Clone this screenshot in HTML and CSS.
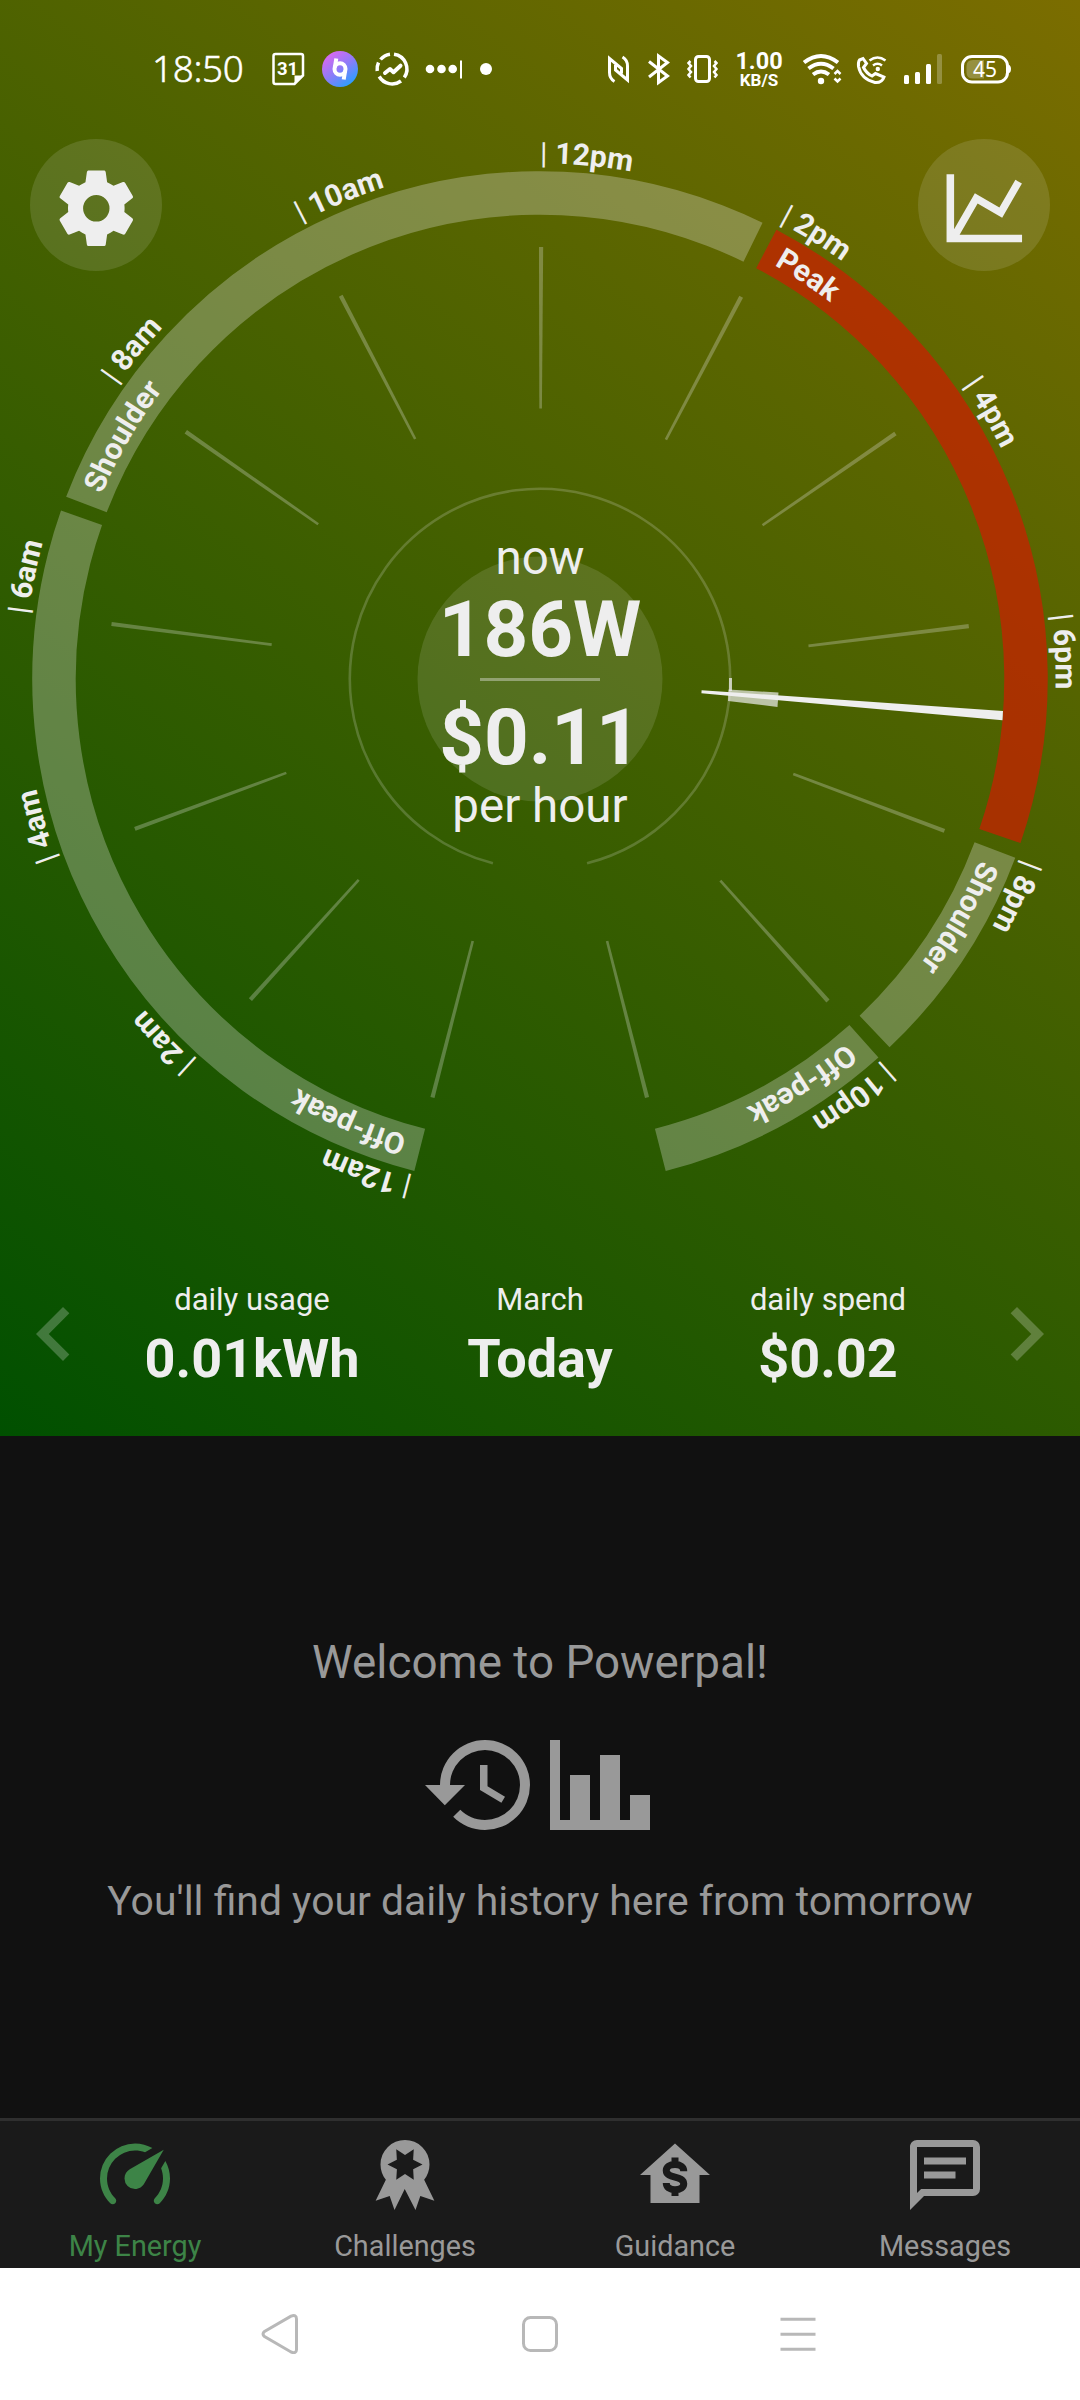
FILE: index.html
```html
<!DOCTYPE html>
<html lang="en">
<head>
<meta charset="utf-8">
<title>Powerpal</title>
<link rel="stylesheet" href="styles.css">
</head>
<body>
<main class="app">
  <section class="hero">
    <header class="status">
      <span class="clock">18:50</span>
      <svg width="32" height="40" viewBox="272 49 32 40"><path d="M275.500 54h25.500q2 0 2 2v19.500l-8.500 8.500H275.500q-2 0-2-2V56q0-2 2-2z" class="line w25"/><path d="M302.500 75.500h-8v8z" class="solid"/><text x="287.500" y="75" class="cal">31</text></svg>
      <svg width="36" height="40" viewBox="322 49 36 40"><defs><linearGradient id="orb" x1=".2" y1=".1" x2=".8" y2=".9"><stop offset="0" stop-color="#d56af0"/><stop offset=".5" stop-color="#8d7cf8"/><stop offset="1" stop-color="#2f9dff"/></linearGradient></defs><circle cx="340" cy="69" r="18" fill="url(#orb)"/><ellipse cx="340" cy="69" rx="5.500" ry="5.800" class="line w4"/><path d="M336.300 58.500l-1.500 9M343.700 79.500l1.500-9" class="line w4"/></svg>
      <svg width="32" height="40" viewBox="376 49 32 40"><path d="M394 54.200A15 15 0 0 1 404.300 77.500M401 81A15 15 0 0 1 379.200 76.500M377.200 71A15 15 0 0 1 378.500 62.500M380.500 59.500A15 15 0 0 1 390 54.200" class="line w35"/><path d="M385 73l5-4 3.500 3.200 7-6.500" class="line w4 round"/></svg>
      <svg width="36" height="40" viewBox="426 49 36 40"><g class="solid"><circle cx="430" cy="69" r="4.300"/><circle cx="441.500" cy="69" r="4.300"/><circle cx="452.700" cy="69" r="4.300"/><path d="M460 60.500h2v18h-2z"/></g></svg>
      <svg width="12" height="40" viewBox="480 49 12 40"><circle cx="486" cy="69" r="6" class="solid"/></svg>
      <div class="system">
        <svg width="22" height="40" viewBox="608 49 22 40"><path d="M614.500 81.500q-5-3-5-9V58.500L621.500 68.500v5M622.500 57q5 3 5 9V80L615.500 70v-5" class="line w3"/></svg>
        <svg width="21" height="40" viewBox="648 49 21 40"><path d="M649 61.500l18.500 14.500-9 6.500V56l9 6.500L649 77" class="line w3"/></svg>
        <svg width="31" height="40" viewBox="687 49 31 40"><rect x="695.500" y="56.500" width="14" height="25" rx="3" class="line w3"/><path d="M690.500 61l-2 2 2.500 3-2.500 3 2.500 3-2.500 3 2 2.500M714.500 61l2 2-2.500 3 2.500 3-2.500 3 2.500 3-2 2.500" class="line w25"/></svg>
        <div class="speed"><span class="rate">1.00</span><span class="unit">KB/S</span></div>
        <svg width="41" height="40" viewBox="800 49 41 40"><path d="M804 62.500Q821 49.500 838 62.500M808.500 68.500Q821 59 833.500 68.500M813 74.500Q821 68.500 829 74.500" class="line w4"/><circle cx="821" cy="81" r="3.200" class="solid"/><path d="M834.500 74l3-3 3 3M834.500 78.500l3 3 3-3" class="line w25"/></svg>
        <svg width="28" height="40" viewBox="859 49 28 40"><path d="M859.500 60l3.500-1.500 3.500 5-3 4q3 6 8.500 8.500l3.500-2.500 8.500 3.500q-2 6-9 5.500-14-3.500-16.500-16-.5-4.500 1-6.500z" class="line w3"/><path d="M869.500 60.500q8-6 16 0M873 65.500q4.500-3.500 9 0" class="line w25"/><circle cx="877.800" cy="69" r="2.200" class="solid"/></svg>
        <svg width="38" height="40" viewBox="905 49 38 40"><g class="solid"><rect x="904" y="75" width="5" height="9" rx="1.500"/><rect x="915" y="72" width="5" height="12" rx="1.500"/><rect x="926" y="64" width="5" height="20" rx="1.500"/><rect x="937" y="54" width="5" height="30" rx="1.500" opacity=".25"/></g></svg>
        <svg width="50" height="40" viewBox="961 49 50 40"><rect x="962.500" y="56.500" width="45" height="25.500" rx="9.500" class="line w3"/><path d="M1008.500 64.500q2.500 1 2.500 4.500t-2.500 4.500z" class="solid"/><path d="M973 60h11v18.500h-11q-6.500 0-6.500-6v-6.500q0-6 6.500-6z" class="solid" opacity=".25"/><text x="985" y="76.700" class="batt">45</text></svg>
      </div>
    </header>

    <div class="stage">
      <svg class="dial" width="1080" height="1120" viewBox="0 110 1080 1120">
        <defs>
          <path id="hours" d="M540 163.500A515.500 515.500 0 0 1 540 1194.500A515.500 515.500 0 0 1 540 163.500"/>
          <path id="tariffs" d="M540 203.500A475.500 475.500 0 0 1 540 1154.500A475.500 475.500 0 0 1 540 203.500"/>
          <path id="tick" d="M538 247h4.200L541.300 408.500h-2.600z"/>
        </defs>
        <g class="band">
          <circle cx="540" cy="679" r="486" pathLength="360" stroke-dasharray="95.050 400" transform="rotate(104.330 540 679)"/>
          <circle cx="540" cy="679" r="486" pathLength="360" stroke-dasharray="94.950 400" transform="rotate(201.050 540 679)"/>
          <circle class="peak" cx="540" cy="679" r="486" pathLength="360" stroke-dasharray="81.100 400" transform="rotate(-62.250 540 679)"/>
          <circle cx="540" cy="679" r="486" pathLength="360" stroke-dasharray="25.900 400" transform="rotate(20.600 540 679)"/>
          <circle cx="540" cy="679" r="486" pathLength="360" stroke-dasharray="27.470 400" transform="rotate(48.200 540 679)"/>
        </g>
        <circle class="orbit" cx="540" cy="679" r="190.200" pathLength="360" stroke-dasharray="331.340 400" transform="rotate(104.330 540 679)"/>
        <g class="ticks">
          <use href="#tick" transform="rotate(194.400 540 679)"/>
          <use href="#tick" transform="rotate(222.080 540 679)"/>
          <use href="#tick" transform="rotate(249.690 540 679)"/>
          <use href="#tick" transform="rotate(277.300 540 679)"/>
          <use href="#tick" transform="rotate(304.910 540 679)"/>
          <use href="#tick" transform="rotate(332.520 540 679)"/>
          <use href="#tick" transform="rotate(.13 540 679)"/>
          <use href="#tick" transform="rotate(27.740 540 679)"/>
          <use href="#tick" transform="rotate(55.350 540 679)"/>
          <use href="#tick" transform="rotate(82.960 540 679)"/>
          <use href="#tick" transform="rotate(110.570 540 679)"/>
          <use href="#tick" transform="rotate(138.180 540 679)"/>
          <use href="#tick" transform="rotate(165.640 540 679)"/>
        </g>
        <circle class="core" cx="540" cy="679" r="122.500"/>
        <path class="trail" d="M730.500 678v13"/>
        <path class="average" d="M728.500 689.500L778.500 692.500L777.500 707L728 701z"/>
        <path class="needle" d="M701.600 690.200L1003 711L1002.500 720.300L701.400 693.300z"/>
        <g class="hours">
          <text transform="rotate(194.330 540 679)"><textPath href="#hours"><tspan class="bar">| </tspan>12am</textPath></text>
          <text transform="rotate(221.940 540 679)"><textPath href="#hours"><tspan class="bar">| </tspan>2am</textPath></text>
          <text transform="rotate(249.550 540 679)"><textPath href="#hours"><tspan class="bar">| </tspan>4am</textPath></text>
          <text transform="rotate(277.160 540 679)"><textPath href="#hours"><tspan class="bar">| </tspan>6am</textPath></text>
          <text transform="rotate(304.780 540 679)"><textPath href="#hours"><tspan class="bar">| </tspan>8am</textPath></text>
          <text transform="rotate(332.390 540 679)"><textPath href="#hours"><tspan class="bar">| </tspan>10am</textPath></text>
          <text><textPath href="#hours"><tspan class="bar">| </tspan>12pm</textPath></text>
          <text transform="rotate(27.610 540 679)"><textPath href="#hours"><tspan class="bar">| </tspan>2pm</textPath></text>
          <text transform="rotate(55.220 540 679)"><textPath href="#hours"><tspan class="bar">| </tspan>4pm</textPath></text>
          <text transform="rotate(82.840 540 679)"><textPath href="#hours"><tspan class="bar">| </tspan>6pm</textPath></text>
          <text transform="rotate(110.450 540 679)"><textPath href="#hours"><tspan class="bar">| </tspan>8pm</textPath></text>
          <text transform="rotate(138.060 540 679)"><textPath href="#hours"><tspan class="bar">| </tspan>10pm</textPath></text>
        </g>
        <g class="hours">
          <text transform="rotate(196.230 540 679)"><textPath href="#tariffs">Off-peak</textPath></text>
          <text transform="rotate(292.870 540 679)"><textPath href="#tariffs">Shoulder</textPath></text>
          <text transform="rotate(29.510 540 679)"><textPath href="#tariffs">Peak</textPath></text>
          <text transform="rotate(112.350 540 679)"><textPath href="#tariffs">Shoulder</textPath></text>
          <text transform="rotate(139.960 540 679)"><textPath href="#tariffs">Off-peak</textPath></text>
        </g>
      </svg>
      <div class="readout">
        <span class="caption">now</span>
        <strong class="figure">186W</strong>
        <span class="rule"></span>
        <strong class="figure">$0.11</strong>
        <span class="caption">per hour</span>
      </div>
      <div class="actions">
        <div class="round-btn"><svg width="90.600" height="90.600" viewBox="0 0 24 24"><path d="M12,15.500A3.500,3.500 0 0,1 8.500,12A3.500,3.500 0 0,1 12,8.500A3.500,3.500 0 0,1 15.500,12A3.500,3.500 0 0,1 12,15.500M19.430,12.970C19.470,12.650 19.500,12.330 19.500,12C19.500,11.670 19.470,11.340 19.430,11L21.540,9.370C21.730,9.220 21.780,8.950 21.660,8.730L19.660,5.270C19.540,5.050 19.270,4.960 19.050,5.050L16.560,6.050C16.040,5.660 15.500,5.320 14.870,5.070L14.500,2.420C14.460,2.180 14.250,2 14,2H10C9.750,2 9.540,2.180 9.500,2.420L9.130,5.070C8.500,5.320 7.960,5.660 7.440,6.050L4.950,5.050C4.730,4.960 4.460,5.050 4.340,5.270L2.340,8.730C2.210,8.950 2.270,9.220 2.460,9.370L4.570,11C4.530,11.340 4.500,11.670 4.500,12C4.500,12.330 4.530,12.650 4.570,12.970L2.460,14.630C2.270,14.780 2.210,15.050 2.340,15.270L4.340,18.730C4.460,18.950 4.730,19.030 4.950,18.950L7.440,17.940C7.960,18.340 8.500,18.680 9.130,18.930L9.500,21.580C9.540,21.820 9.750,22 10,22H14C14.250,22 14.460,21.820 14.500,21.580L14.870,18.930C15.500,18.670 16.040,18.340 16.560,17.940L19.050,18.950C19.270,19.030 19.540,18.950 19.660,18.730L21.660,15.270C21.780,15.050 21.730,14.780 21.540,14.630L19.430,12.970Z"/></svg></div>
        <div class="round-btn"><svg width="90.600" height="90.600" viewBox="0 0 24 24"><path d="M16,11.780L20.240,4.450L21.970,5.450L16.740,14.500L10.230,10.750L5.460,19H22V21H2V3H4V17.540L9.500,8L16,11.780Z"/></svg></div>
      </div>
    </div>

    <div class="day">
      <svg class="chevron" width="108" height="108" viewBox="0 0 24 24"><path d="M15.410,16.580L10.830,12L15.410,7.410L14,6L8,12L14,18L15.410,16.580Z"/></svg>
      <div class="stat"><span>daily usage</span><strong>0.01kWh</strong></div>
      <div class="stat"><span>March</span><strong>Today</strong></div>
      <div class="stat"><span>daily spend</span><strong>$0.02</strong></div>
      <svg class="chevron" width="108" height="108" viewBox="0 0 24 24"><path d="M8.590,16.580L13.170,12L8.590,7.410L10,6L16,12L10,18L8.590,16.580Z"/></svg>
    </div>
  </section>

  <section class="history">
    <p class="welcome">Welcome to Powerpal!</p>
    <div class="glyphs">
      <svg width="120" height="120" viewBox="0 0 24 24"><path d="M13.500,8H12V13L16.280,15.540L17,14.330L13.500,12.250V8M13,3A9,9 0 0,0 4,12H1L4.960,16.030L9,12H6A7,7 0 0,1 13,5A7,7 0 0,1 20,12A7,7 0 0,1 13,19C11.070,19 9.320,18.210 8.060,16.940L6.640,18.360C8.270,20 10.500,21 13,21A9,9 0 0,0 22,12A9,9 0 0,0 13,3"/></svg>
      <svg width="120" height="120" viewBox="0 0 24 24"><path d="M22,21H2V3H4V19H6V10H10V19H12V6H16V19H18V14H22V21Z"/></svg>
    </div>
    <p class="hint">You'll find your daily history here from tomorrow</p>
  </section>

  <nav class="tabs">
    <div class="tab active"><svg width="84" height="84" viewBox="0 0 24 24"><path d="M12,16A3,3 0 0,1 9,13C9,11.880 9.610,10.900 10.500,10.390L20.210,4.770L14.680,14.350C14.180,15.330 13.170,16 12,16M12,3C13.810,3 15.500,3.500 16.970,4.320L14.870,5.530C14,5.190 13,5 12,5A8,8 0 0,0 4,13C4,15.210 4.890,17.210 6.340,18.650H6.350C6.740,19.040 6.740,19.670 6.350,20.060C5.960,20.450 5.320,20.450 4.930,20.070V20.070C3.120,18.260 2,15.760 2,13A10,10 0 0,1 12,3M22,13C22,15.760 20.880,18.260 19.070,20.070V20.070C18.680,20.450 18.050,20.450 17.660,20.060C17.270,19.670 17.270,19.040 17.660,18.650V18.650C19.110,17.200 20,15.210 20,13C20,12 19.810,11 19.460,10.100L20.670,8C21.500,9.500 22,11.180 22,13Z"/></svg><span>My Energy</span></div>
    <div class="tab"><svg width="84" height="84" viewBox="0 0 24 24"><path d="M20.390,19.370L16.380,18L15,22L11.920,16L9,22L7.620,18L3.610,19.370L6.530,13.370C5.570,12.170 5,10.650 5,9A7,7 0 0,1 12,2A7,7 0 0,1 19,9C19,10.650 18.430,12.170 17.470,13.370L20.390,19.370M7,9L9.690,10.340L9.500,13.340L12,11.680L14.500,13.330L14.330,10.340L17,9L14.320,7.650L14.500,4.670L12,6.310L9.500,4.650L9.670,7.660L7,9Z"/></svg><span>Challenges</span></div>
    <div class="tab"><svg width="84" height="84" viewBox="0 0 24 24"><path d="M12,3L2,12H5V20H19V12H22Z"/><path class="dollar" d="M14.500 10.900C14.500 9.700 13.500 9 12 9S9.500 9.700 9.500 10.700C9.500 13.200 14.500 12 14.500 14.500C14.500 15.500 13.500 16.200 12 16.200S9.500 15.500 9.500 14.300M12 7V9M12 16V18"/></svg><span>Guidance</span></div>
    <div class="tab"><svg width="84" height="84" viewBox="0 0 24 24"><path d="M20,2A2,2 0 0,1 22,4V16A2,2 0 0,1 20,18H6L2,22V4C2,2.890 2.900,2 4,2H20M4,4V17.170L5.170,16H20V4H4M6,7H18V9H6V7M6,11H15V13H6V11Z"/></svg><span>Messages</span></div>
  </nav>

  <footer class="system-nav">
    <svg width="40" height="44" viewBox="260 2312 40 44"><path d="M264.500 2331.500Q261.500 2334 264.500 2336.500L291 2352Q296.500 2354 296.500 2349.500V2319Q296.500 2314 291 2316.200Z"/></svg>
    <svg width="36" height="44" viewBox="522 2312 36 44"><rect x="523.500" y="2317.500" width="33" height="33" rx="7"/></svg>
    <svg width="36" height="44" viewBox="780 2312 36 44"><path d="M780.500 2319.300h35M780.500 2334.300h35M780.500 2349.300h35"/></svg>
  </footer>
</main>
</body>
</html>
```
FILE: styles.css
```css
* { box-sizing: border-box; }

body {
  margin: 0;
  background: #111;
  font-family: Roboto, "Liberation Sans", sans-serif;
  color: #eee;
}

p { margin: 0; }
svg { display: block; flex: none; overflow: visible; }

.app {
  width: 1080px;
  height: 2400px;
  display: flex;
  flex-direction: column;
}

/* Hero */
.hero {
  height: 1436px;
  background: linear-gradient(36.950deg, #005000 0%, #7b6d00 100%);
}

.status {
  height: 110px;
  padding: 49px 69px 0 152px;
  display: flex;
  align-items: flex-start;
  gap: 18px;
  color: #fff;
}
.clock {
  width: 102px;
  font: 300 36.800px/39px "Noto Sans", sans-serif;
  letter-spacing: -.3px;
  -webkit-text-stroke: .5px #fff;
}
.system {
  margin-left: auto;
  display: flex;
  gap: 18px;
}
.speed {
  width: 46px;
  display: flex;
  flex-direction: column;
  align-items: center;
  font-weight: 700;
}
.rate { font-size: 23.500px; line-height: 24px; }
.unit { font-size: 17px; line-height: 14px; }
.solid { fill: #fff; }
.line { fill: none; stroke: #fff; }
.w25 { stroke-width: 2.500; }
.w3 { stroke-width: 3; }
.w35 { stroke-width: 3.500; }
.w4 { stroke-width: 4; }
.round { stroke-linecap: round; stroke-linejoin: round; }
.cal { font: 700 18.500px Roboto, sans-serif; fill: #fff; text-anchor: middle; }
.batt { font: 21px "Noto Sans", sans-serif; fill: #fff; text-anchor: middle; }

/* Dial */
.stage {
  position: relative;
  height: 1120px;
}
.band circle { fill: none; stroke: rgba(238, 238, 238, .29); stroke-width: 43.500; }
.band .peak { stroke: rgba(207, 28, 0, .7); }
.orbit { fill: none; stroke: rgba(238, 238, 238, .2); stroke-width: 2.600; }
.ticks { fill: rgba(238, 238, 238, .28); }
.core { fill: rgba(238, 238, 238, .13); }
.trail { fill: none; stroke: rgba(238, 238, 238, .75); stroke-width: 3; }
.average { fill: rgba(238, 238, 238, .7); }
.needle { fill: #eee; }
.hours { font-size: 30px; font-weight: 700; fill: #eee; }
.bar { font-weight: 400; }

.readout {
  position: absolute;
  inset: 0;
  padding-top: 420px;
  display: flex;
  flex-direction: column;
  align-items: center;
}
.caption { font-size: 47.500px; line-height: 56px; }
.figure { font-size: 78px; line-height: 80px; }
.caption + .figure { margin-top: 4px; }
.rule {
  width: 120px;
  height: 3px;
  margin: 8px 0 16.500px;
  background: rgba(238, 238, 238, .4);
}

.actions {
  position: absolute;
  inset: 29px 30px auto;
  display: flex;
  justify-content: space-between;
}
.round-btn {
  width: 132px;
  height: 132px;
  padding-top: 6px;
  border-radius: 50%;
  background: rgba(238, 238, 238, .13);
  display: flex;
  align-items: center;
  justify-content: center;
  fill: #eee;
}

/* Selected day */
.day {
  display: flex;
  align-items: flex-start;
  padding-top: 50px;
}
.chevron { fill: rgba(238, 238, 238, .25); }
.stat {
  width: 288px;
  display: flex;
  flex-direction: column;
  align-items: center;
  gap: 7px;
}
.stat span { font-size: 31px; line-height: 40px; }
.stat strong { font-size: 54px; line-height: 64px; }

/* Empty history */
.history {
  height: 682px;
  padding-top: 200px;
  display: flex;
  flex-direction: column;
  align-items: center;
  color: #999;
  fill: #999;
}
.welcome { font-size: 45.800px; line-height: 54px; }
.glyphs { display: flex; margin: 35px 0 32px; }
.hint { font-size: 40.900px; line-height: 48px; }

/* Tab bar */
.tabs {
  height: 150px;
  border-top: 3px solid #2f2f2f;
  background: #1a1a1a;
  display: flex;
}
.tab {
  flex: 1;
  padding-top: 12.300px;
  display: flex;
  flex-direction: column;
  align-items: center;
  gap: 11.500px;
  color: #999;
  fill: #999;
  font-size: 28.800px;
  line-height: 34px;
}
.active { color: #3d8447; fill: #3d8447; }
.dollar { fill: none; stroke: #1a1a1a; stroke-width: 2; }

.system-nav {
  height: 132px;
  padding: 44px 264px 0 260px;
  background: #fff;
  display: flex;
  justify-content: space-between;
  fill: none;
  stroke: #b8b8b8;
  stroke-width: 3;
}
```
